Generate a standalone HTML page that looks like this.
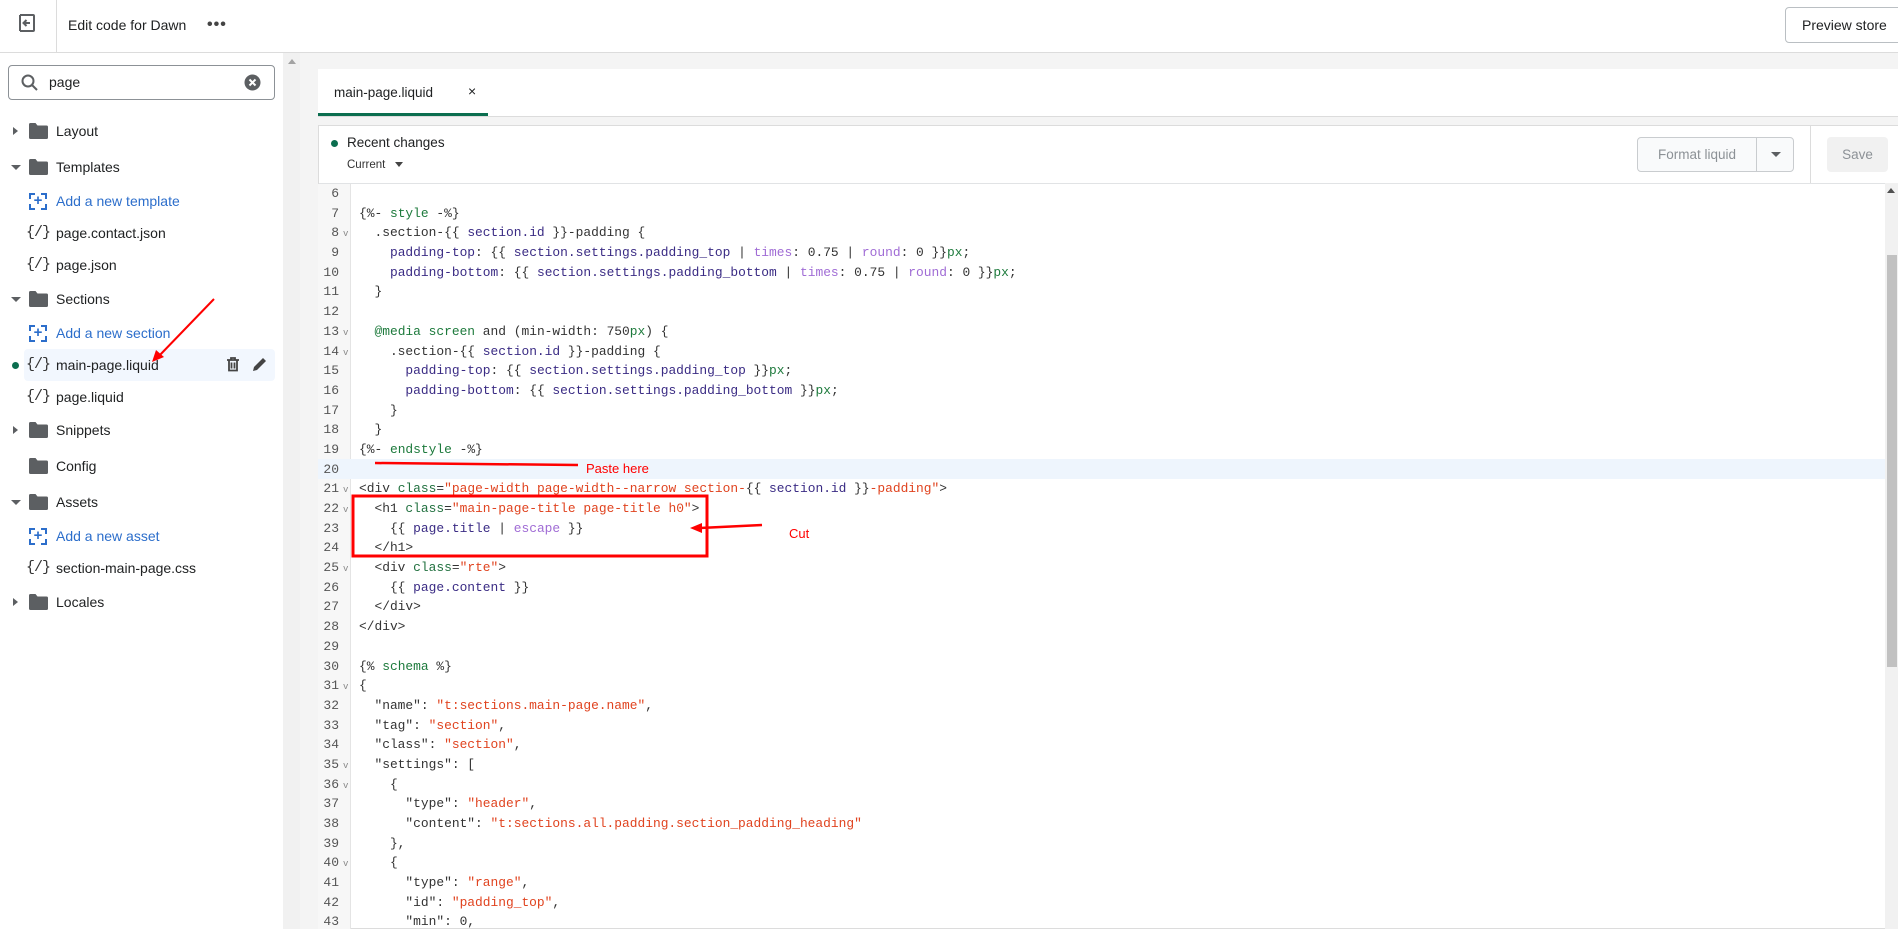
<!DOCTYPE html>
<html><head><meta charset="utf-8"><style>
*{box-sizing:border-box;margin:0;padding:0}
body{width:1898px;height:929px;overflow:hidden;background:#f4f4f4;font-family:"Liberation Sans",Arial,sans-serif;color:#202223;position:relative}
.abs{position:absolute}
#hdr{left:0;top:0;width:1898px;height:53px;background:#fff;border-bottom:1px solid #dcdcdc}
#side{left:0;top:53px;width:283px;height:876px;background:#fff}
#sscroll{left:283px;top:53px;width:17px;height:876px;background:#f1f1f1}
.it{position:absolute;left:0;height:32px;width:283px;font-size:14px;line-height:32px}
.it .tx{position:absolute;left:56px}
.fold{position:absolute;left:29px;top:8px;width:19px;height:16px}
.tri{position:absolute;left:13px;top:12px;width:0;height:0}
.tri.r{border-top:4px solid transparent;border-bottom:4px solid transparent;border-left:5px solid #5c5f62}
.tri.d{left:11px;top:14px;border-left:5px solid transparent;border-right:5px solid transparent;border-top:5px solid #5c5f62}
.cb{position:absolute;left:26px;font-family:"Liberation Mono",monospace;font-size:15px;color:#333;letter-spacing:-1px}
.add{position:absolute;left:29px;top:8px;width:18px;height:17px;border:2px dashed #2c6ecb;color:#2c6ecb;font-size:15px;line-height:12px;text-align:center;font-weight:bold}
.blue{color:#2c6ecb}
#panel{left:318px;top:125px;width:1580px;height:804px;background:#fff;border:1px solid #dcdcdc;border-right:none}
#code{left:318px;top:184px;width:1567px;height:745px;overflow:hidden;font-family:"Liberation Mono",monospace;font-size:12.9px;color:#333}
.ln{height:19.7px;line-height:19.7px;white-space:pre;position:relative}
.ln .n{position:absolute;left:0;width:21px;text-align:right;color:#555;font-size:13px}
.ln .f{position:absolute;left:25px;top:2px;font-size:9px;color:#888}
.ln .c{position:absolute;left:41px}
.k{color:#1d7a3c}.s{color:#e0431f}.p{color:#a06cd5}.v{color:#3a2b84}.a{color:#227140}
</style></head><body>
<div id="hdr" class="abs">
  <svg class="abs" style="left:18px;top:14px" width="18" height="18" viewBox="0 0 18 18"><path d="M2 1h13a1 1 0 0 1 1 1v14a1 1 0 0 1-1 1H2" fill="none" stroke="#5c5f62" stroke-width="2"/><path d="M2 1v16" stroke="#5c5f62" stroke-width="2"/><path d="M12 9H6M8.5 6L5.5 9l3 3" fill="none" stroke="#5c5f62" stroke-width="2"/></svg>
  <div class="abs" style="left:56px;top:0;width:1px;height:53px;background:#dcdcdc"></div>
  <div class="abs" style="left:68px;top:17px;font-size:14px">Edit code for Dawn</div>
  <div class="abs" style="left:207px;top:16px;font-size:16px;letter-spacing:1px;font-weight:bold;color:#444">•••</div>
  <div class="abs" style="left:1785px;top:7px;width:125px;height:36px;border:1px solid #babfc3;border-radius:4px;font-size:14px;line-height:34px;padding-left:16px;color:#202223">Preview store</div>
</div>
<div id="side" class="abs">
  <div class="abs" style="left:8px;top:12px;width:267px;height:35px;border:1px solid #8c9196;border-radius:4px">
    <svg class="abs" style="left:12px;top:8px" width="18" height="18" viewBox="0 0 18 18"><circle cx="7" cy="7" r="5.5" fill="none" stroke="#5c5f62" stroke-width="2"/><path d="M11 11l5 5" stroke="#5c5f62" stroke-width="2"/></svg>
    <div class="abs" style="left:40px;top:8px;font-size:14px">page</div>
    <svg class="abs" style="left:235px;top:8px" width="17" height="17" viewBox="0 0 17 17"><circle cx="8.5" cy="8.5" r="8" fill="#5c5f62"/><path d="M5.5 5.5l6 6M11.5 5.5l-6 6" stroke="#fff" stroke-width="2"/></svg>
  </div>
</div>
<div class="it" style="top:115px"><span class="tri r"></span><svg class="fold" viewBox="0 0 19 16"><path d="M0 1.5a1.5 1.5 0 0 1 1.5-1.5h5l2 2.5h9a1.5 1.5 0 0 1 1.5 1.5v10.5a1.5 1.5 0 0 1-1.5 1.5h-16a1.5 1.5 0 0 1-1.5-1.5z" fill="#5c5f62"/></svg><span class="tx">Layout</span></div>
<div class="it" style="top:151px"><span class="tri d"></span><svg class="fold" viewBox="0 0 19 16"><path d="M0 1.5a1.5 1.5 0 0 1 1.5-1.5h5l2 2.5h9a1.5 1.5 0 0 1 1.5 1.5v10.5a1.5 1.5 0 0 1-1.5 1.5h-16a1.5 1.5 0 0 1-1.5-1.5z" fill="#5c5f62"/></svg><span class="tx">Templates</span></div>
<div class="it" style="top:185px"><span class="add">+</span><span class="tx blue">Add a new template</span></div>
<div class="it" style="top:217px"><span class="cb">{/}</span><span class="tx">page.contact.json</span></div>
<div class="it" style="top:249px"><span class="cb">{/}</span><span class="tx">page.json</span></div>
<div class="it" style="top:283px"><span class="tri d"></span><svg class="fold" viewBox="0 0 19 16"><path d="M0 1.5a1.5 1.5 0 0 1 1.5-1.5h5l2 2.5h9a1.5 1.5 0 0 1 1.5 1.5v10.5a1.5 1.5 0 0 1-1.5 1.5h-16a1.5 1.5 0 0 1-1.5-1.5z" fill="#5c5f62"/></svg><span class="tx">Sections</span></div>
<div class="it" style="top:317px"><span class="add">+</span><span class="tx blue">Add a new section</span></div>
<div class="abs" style="left:24px;top:349px;width:251px;height:32px;background:#f2f7fe;border-radius:4px"></div>
<div class="abs" style="left:12px;top:362px;width:7px;height:7px;border-radius:50%;background:#0b6e4f"></div>
<div class="it" style="top:349px"><span class="cb">{/}</span><span class="tx">main-page.liquid</span>
  <svg class="abs" style="left:226px;top:8px" width="14" height="15" viewBox="0 0 14 15"><path d="M1 3h12M5 3V1h4v2M3 3v10.5h8V3M5.5 5.5v6M8.5 5.5v6" fill="none" stroke="#444" stroke-width="1.8"/></svg>
  <svg class="abs" style="left:252px;top:8px" width="15" height="15" viewBox="0 0 15 15"><path d="M1 14l1-4L11 1l3 3-9 9z" fill="#444"/></svg></div>
<div class="it" style="top:381px"><span class="cb">{/}</span><span class="tx">page.liquid</span></div>
<div class="it" style="top:414px"><span class="tri r"></span><svg class="fold" viewBox="0 0 19 16"><path d="M0 1.5a1.5 1.5 0 0 1 1.5-1.5h5l2 2.5h9a1.5 1.5 0 0 1 1.5 1.5v10.5a1.5 1.5 0 0 1-1.5 1.5h-16a1.5 1.5 0 0 1-1.5-1.5z" fill="#5c5f62"/></svg><span class="tx">Snippets</span></div>
<div class="it" style="top:450px"><svg class="fold" viewBox="0 0 19 16"><path d="M0 1.5a1.5 1.5 0 0 1 1.5-1.5h5l2 2.5h9a1.5 1.5 0 0 1 1.5 1.5v10.5a1.5 1.5 0 0 1-1.5 1.5h-16a1.5 1.5 0 0 1-1.5-1.5z" fill="#5c5f62"/></svg><span class="tx">Config</span></div>
<div class="it" style="top:486px"><span class="tri d"></span><svg class="fold" viewBox="0 0 19 16"><path d="M0 1.5a1.5 1.5 0 0 1 1.5-1.5h5l2 2.5h9a1.5 1.5 0 0 1 1.5 1.5v10.5a1.5 1.5 0 0 1-1.5 1.5h-16a1.5 1.5 0 0 1-1.5-1.5z" fill="#5c5f62"/></svg><span class="tx">Assets</span></div>
<div class="it" style="top:520px"><span class="add">+</span><span class="tx blue">Add a new asset</span></div>
<div class="it" style="top:552px"><span class="cb">{/}</span><span class="tx">section-main-page.css</span></div>
<div class="it" style="top:586px"><span class="tri r"></span><svg class="fold" viewBox="0 0 19 16"><path d="M0 1.5a1.5 1.5 0 0 1 1.5-1.5h5l2 2.5h9a1.5 1.5 0 0 1 1.5 1.5v10.5a1.5 1.5 0 0 1-1.5 1.5h-16a1.5 1.5 0 0 1-1.5-1.5z" fill="#5c5f62"/></svg><span class="tx">Locales</span></div>
<div id="sscroll" class="abs"><div class="abs" style="left:5px;top:6px;border-left:4px solid transparent;border-right:4px solid transparent;border-bottom:5px solid #a3a3a3"></div></div>

<div class="abs" style="left:318px;top:69px;width:1580px;height:48px;background:#fff;border-bottom:1px solid #dcdcdc"></div>
<div class="abs" style="left:318px;top:69px;width:170px;height:47px;background:#fff;border-radius:6px 6px 0 0;border-bottom:3px solid #0b6e4f">
  <div class="abs" style="left:16px;top:16px;font-size:13.5px">main-page.liquid</div>
  <div class="abs" style="left:150px;top:14px;font-size:14px">×</div>
</div>
<div id="panel" class="abs">
  <div class="abs" style="left:12px;top:14px;width:7px;height:7px;border-radius:50%;background:#0b6e4f"></div>
  <div class="abs" style="left:28px;top:9px;font-size:13.5px">Recent changes</div>
  <div class="abs" style="left:28px;top:33px;font-size:11.5px;color:#333">Current <span style="display:inline-block;margin-left:6px;border-left:4px solid transparent;border-right:4px solid transparent;border-top:5px solid #444;vertical-align:middle"></span></div>
  <div class="abs" style="left:0;top:57px;width:1580px;height:1px;background:#e1e3e5"></div>
  <div class="abs" style="left:1318px;top:11px;width:157px;height:35px;border:1px solid #c9cccf;border-radius:4px;background:#f9fafb">
    <div class="abs" style="left:0;top:0;width:118px;height:33px;line-height:33px;text-align:center;font-size:13.5px;color:#8c9196">Format liquid</div>
    <div class="abs" style="left:118px;top:0;width:1px;height:33px;background:#c9cccf"></div>
    <div class="abs" style="left:133px;top:14px;border-left:5px solid transparent;border-right:5px solid transparent;border-top:5px solid #5c5f62"></div>
  </div>
  <div class="abs" style="left:1491px;top:0;width:1px;height:57px;background:#dcdcdc"></div>
  <div class="abs" style="left:1508px;top:11px;width:61px;height:35px;border-radius:4px;background:#f1f1f1;text-align:center;line-height:35px;font-size:13.5px;color:#8c9196">Save</div>
</div>
<div class="abs" style="left:318px;top:184px;width:33px;height:745px;background:#f7f7f7;border-right:1px solid #e4e4e4"></div>
<div class="abs" style="left:318px;top:459px;width:1567px;height:19.7px;background:#eef5fd"></div>
<div id="code" class="abs">
<div class="ln"><span class="n">6</span></div>
<div class="ln"><span class="n">7</span><span class="c">{%- <span class="k">style</span> -%}</span></div>
<div class="ln"><span class="n">8</span><span class="f">v</span><span class="c">  .section-{{ <span class="v">section.id</span> }}-padding {</span></div>
<div class="ln"><span class="n">9</span><span class="c">    <span class="v">padding-top</span>: {{ <span class="v">section.settings.padding_top</span> | <span class="p">times</span>: 0.75 | <span class="p">round</span>: 0 }}<span class="k">px</span>;</span></div>
<div class="ln"><span class="n">10</span><span class="c">    <span class="v">padding-bottom</span>: {{ <span class="v">section.settings.padding_bottom</span> | <span class="p">times</span>: 0.75 | <span class="p">round</span>: 0 }}<span class="k">px</span>;</span></div>
<div class="ln"><span class="n">11</span><span class="c">  }</span></div>
<div class="ln"><span class="n">12</span></div>
<div class="ln"><span class="n">13</span><span class="f">v</span><span class="c">  <span class="k">@media screen</span> and (min-width: 750<span class="k">px</span>) {</span></div>
<div class="ln"><span class="n">14</span><span class="f">v</span><span class="c">    .section-{{ <span class="v">section.id</span> }}-padding {</span></div>
<div class="ln"><span class="n">15</span><span class="c">      <span class="v">padding-top</span>: {{ <span class="v">section.settings.padding_top</span> }}<span class="k">px</span>;</span></div>
<div class="ln"><span class="n">16</span><span class="c">      <span class="v">padding-bottom</span>: {{ <span class="v">section.settings.padding_bottom</span> }}<span class="k">px</span>;</span></div>
<div class="ln"><span class="n">17</span><span class="c">    }</span></div>
<div class="ln"><span class="n">18</span><span class="c">  }</span></div>
<div class="ln"><span class="n">19</span><span class="c">{%- <span class="k">endstyle</span> -%}</span></div>
<div class="ln"><span class="n">20</span></div>
<div class="ln"><span class="n">21</span><span class="f">v</span><span class="c">&lt;div <span class="a">class</span>=<span class="s">"page-width page-width--narrow section-</span>{{ <span class="v">section.id</span> }}<span class="s">-padding"</span>&gt;</span></div>
<div class="ln"><span class="n">22</span><span class="f">v</span><span class="c">  &lt;h1 <span class="a">class</span>=<span class="s">"main-page-title page-title h0"</span>&gt;</span></div>
<div class="ln"><span class="n">23</span><span class="c">    {{ <span class="v">page.title</span> | <span class="p">escape</span> }}</span></div>
<div class="ln"><span class="n">24</span><span class="c">  &lt;/h1&gt;</span></div>
<div class="ln"><span class="n">25</span><span class="f">v</span><span class="c">  &lt;div <span class="a">class</span>=<span class="s">"rte"</span>&gt;</span></div>
<div class="ln"><span class="n">26</span><span class="c">    {{ <span class="v">page.content</span> }}</span></div>
<div class="ln"><span class="n">27</span><span class="c">  &lt;/div&gt;</span></div>
<div class="ln"><span class="n">28</span><span class="c">&lt;/div&gt;</span></div>
<div class="ln"><span class="n">29</span></div>
<div class="ln"><span class="n">30</span><span class="c">{% <span class="k">schema</span> %}</span></div>
<div class="ln"><span class="n">31</span><span class="f">v</span><span class="c">{</span></div>
<div class="ln"><span class="n">32</span><span class="c">  "name": <span class="s">"t:sections.main-page.name"</span>,</span></div>
<div class="ln"><span class="n">33</span><span class="c">  "tag": <span class="s">"section"</span>,</span></div>
<div class="ln"><span class="n">34</span><span class="c">  "class": <span class="s">"section"</span>,</span></div>
<div class="ln"><span class="n">35</span><span class="f">v</span><span class="c">  "settings": [</span></div>
<div class="ln"><span class="n">36</span><span class="f">v</span><span class="c">    {</span></div>
<div class="ln"><span class="n">37</span><span class="c">      "type": <span class="s">"header"</span>,</span></div>
<div class="ln"><span class="n">38</span><span class="c">      "content": <span class="s">"t:sections.all.padding.section_padding_heading"</span></span></div>
<div class="ln"><span class="n">39</span><span class="c">    },</span></div>
<div class="ln"><span class="n">40</span><span class="f">v</span><span class="c">    {</span></div>
<div class="ln"><span class="n">41</span><span class="c">      "type": <span class="s">"range"</span>,</span></div>
<div class="ln"><span class="n">42</span><span class="c">      "id": <span class="s">"padding_top"</span>,</span></div>
<div class="ln"><span class="n">43</span><span class="c">      "min": 0,</span></div>
</div>
<div class="abs" style="left:1885px;top:183px;width:13px;height:746px;background:#f1f1f1"></div>
<div class="abs" style="left:1887px;top:255px;width:10px;height:412px;background:#c1c1c1"></div>
<div class="abs" style="left:1887px;top:188px;border-left:4px solid transparent;border-right:4px solid transparent;border-bottom:5px solid #505050"></div>

<svg class="abs" style="left:0;top:0" width="1898" height="929">
  <g stroke="#f00" stroke-width="2" fill="none">
    <path d="M214 299L158 357"/>
    <path d="M375 463L578 465" stroke-width="2.5"/>
    <rect x="353" y="496" width="354" height="60" stroke-width="3"/>
    <path d="M762 525L700 528" stroke-width="2.5"/>
  </g>
  <path d="M152 362l4-12 8 7z" fill="#f00"/>
  <path d="M690 528l12-5 0 10z" fill="#f00"/>
  <text x="586" y="473" fill="#f00" font-family="Liberation Sans, sans-serif" font-size="13">Paste here</text>
  <text x="789" y="538" fill="#f00" font-family="Liberation Sans, sans-serif" font-size="13">Cut</text>
</svg>
</body></html>
